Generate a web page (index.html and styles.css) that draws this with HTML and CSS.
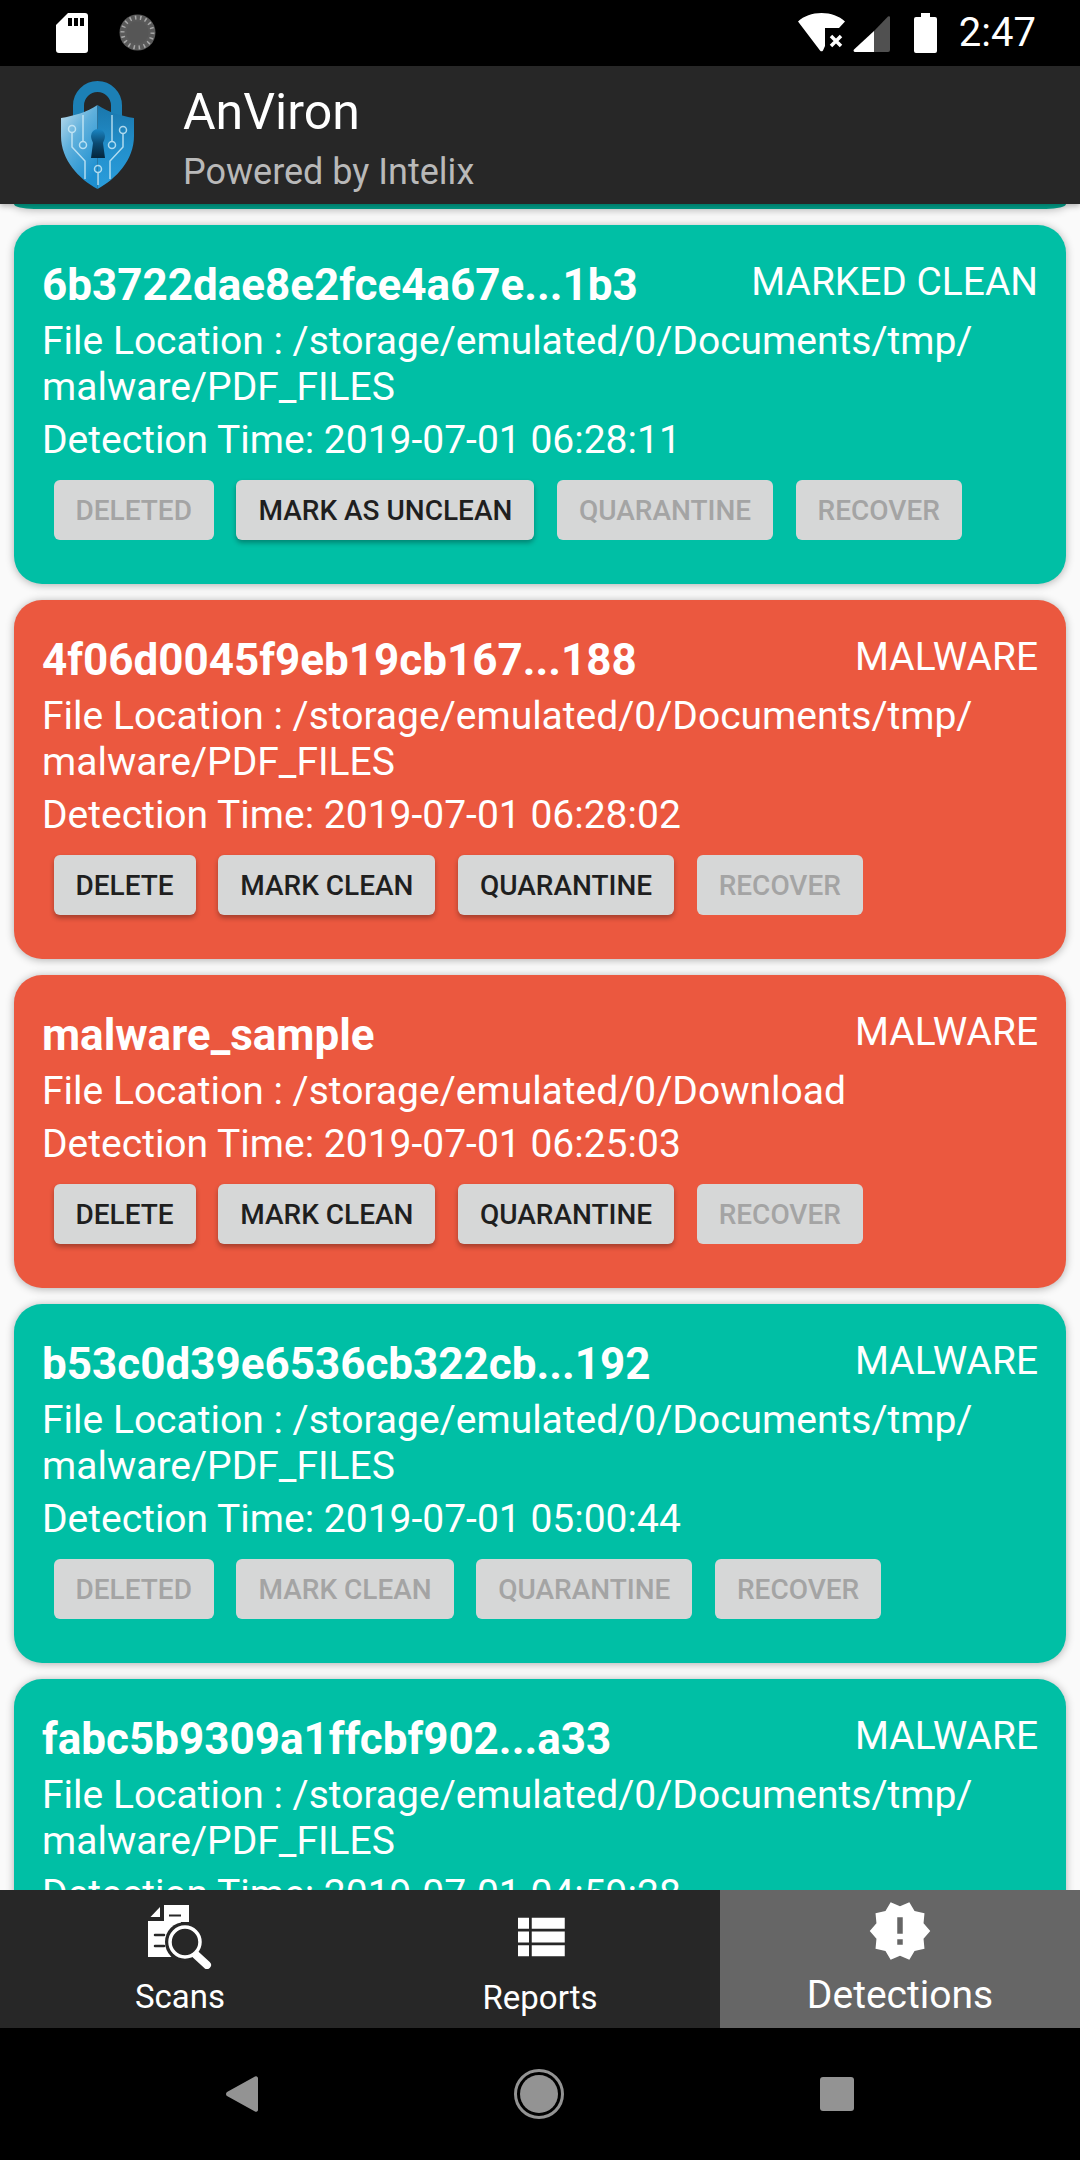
FILE: index.html
```html
<!DOCTYPE html>
<html lang="en">
<head>
    <meta charset="UTF-8">
    <meta name="viewport" content="width=device-width, initial-scale=1.0">
    <title>AnViron</title>
    <link rel="stylesheet" href="styles.css">
</head>
<body>
<div class="phone">

    <!-- status bar -->
    <div class="statusbar">
        <div class="status-left">
            <svg class="ic-sd" viewBox="0 0 32 40"><path d="M12 0H29a3 3 0 0 1 3 3V37a3 3 0 0 1-3 3H3a3 3 0 0 1-3-3V12Z" fill="#fff"/><path d="M12 5h4v8h-4zM18 5h4v8h-4zM24 5h4v8h-4z" fill="#000"/></svg>
            <svg class="ic-sync" viewBox="0 0 38 40"><path d="M35 8A19 19 0 0 1 8 36 19 19 0 0 0 35 8Z" fill="#eee"/><circle cx="18.500" cy="19.500" r="18" fill="#5a5a5a"/><circle cx="18.500" cy="19.500" r="15" fill="none" stroke="#a8a8a8" stroke-width="4" stroke-dasharray="1.500 3.700"/><circle cx="18.500" cy="19.500" r="11" fill="#565656"/></svg>
        </div>
        <div class="status-right">
            <svg class="ic-wifi" viewBox="0 0 47 39"><path d="M0 8.500C6 3 14 0 23.500 0S41 3 47 8.500L41 15H27V33L25 37.500a2 2 0 0 1-3 0Z" fill="#fff"/><path d="M33 23l10 10M43 23L33 33" stroke="#fff" stroke-width="3.500" fill="none"/></svg>
            <svg class="ic-signal" viewBox="0 0 37 37"><path d="M21 16V37H2a1.500 1.500 0 0 1-1-2.600Z" fill="#fff"/><path d="M21 16L35 1.500A1.200 1.200 0 0 1 37 2V35a2 2 0 0 1-2 2H21Z" fill="#505050"/></svg>
            <svg class="ic-battery" viewBox="0 0 23 40"><path d="M7 0h9v4h5a2 2 0 0 1 2 2V38a2 2 0 0 1-2 2H2a2 2 0 0 1-2-2V6a2 2 0 0 1 2-2h5Z" fill="#fff"/></svg>
            <span class="clock">2:47</span>
        </div>
    </div>

    <!-- app bar -->
    <header class="appbar">
        <svg class="logo" viewBox="0 0 73 108">
            <defs>
                <linearGradient id="shieldLeft" x1="0" y1="0" x2="0.600" y2="1">
                    <stop offset="0" stop-color="#c6e0ee"/>
                    <stop offset="0.450" stop-color="#5fb0dc"/>
                    <stop offset="1" stop-color="#1d8fd0"/>
                </linearGradient>
                <linearGradient id="shieldRight" x1="0" y1="0" x2="0" y2="1">
                    <stop offset="0" stop-color="#1a76ab"/>
                    <stop offset="0.500" stop-color="#228fcb"/>
                    <stop offset="1" stop-color="#2a9ddc"/>
                </linearGradient>
                <linearGradient id="keyhole" x1="0" y1="0" x2="0" y2="1">
                    <stop offset="0" stop-color="#1a86c4"/>
                    <stop offset="0.500" stop-color="#0b4a72"/>
                    <stop offset="1" stop-color="#04263c"/>
                </linearGradient>
            </defs>
            <path d="M17.500 36V24.500a19 19 0 0 1 38 0V36" fill="none" stroke="#1c80b6" stroke-width="11"/>
            <path d="M36.500 24C26 31 13 35 0 37V55C0 79 18 98 36.500 108Z" fill="url(#shieldLeft)"/>
            <path d="M36.500 24C47 31 60 35 73 37V55C73 79 55 98 36.500 108Z" fill="url(#shieldRight)"/>
            <g fill="none" stroke="#d2eef9" stroke-width="1.500" opacity="0.800">
                <path d="M22 60V34M51 60V34M11 52V66L24 80V98M62 53V66L49 80V98M37 92V104"/>
                <circle cx="22" cy="64" r="3.500"/>
                <circle cx="51" cy="64" r="3.500"/>
                <circle cx="37" cy="88" r="3.500"/>
                <circle cx="11" cy="48" r="3.500"/>
                <circle cx="62" cy="49" r="3.500"/>
            </g>
            <path d="M30 55a7 7 0 1 1 14 0c0 3-1.500 5-2 7L44 77H30L32 62c-.5-2-2-4-2-7Z" fill="url(#keyhole)"/>
        </svg>
        <div class="appbar-text">
            <div class="app-name">AnViron</div>
            <div class="app-sub">Powered by Intelix</div>
        </div>
    </header>

    <!-- detections -->
    <main class="list">
        <div class="card-stub"></div>

        <div class="card clean">
            <div class="card-head">
                <span class="card-title">6b3722dae8e2fce4a67e...1b3</span>
                <span class="card-status">MARKED CLEAN</span>
            </div>
            <p class="line">File Location : /storage/emulated/0/Documents/tmp/<br>malware/PDF_FILES</p>
            <p class="line time">Detection Time: 2019-07-01 06:28:11</p>
            <div class="actions">
                <button class="btn off">DELETED</button>
                <button class="btn">MARK AS UNCLEAN</button>
                <button class="btn off">QUARANTINE</button>
                <button class="btn off">RECOVER</button>
            </div>
        </div>

        <div class="card bad">
            <div class="card-head">
                <span class="card-title">4f06d0045f9eb19cb167...188</span>
                <span class="card-status">MALWARE</span>
            </div>
            <p class="line">File Location : /storage/emulated/0/Documents/tmp/<br>malware/PDF_FILES</p>
            <p class="line time">Detection Time: 2019-07-01 06:28:02</p>
            <div class="actions">
                <button class="btn">DELETE</button>
                <button class="btn">MARK CLEAN</button>
                <button class="btn">QUARANTINE</button>
                <button class="btn off">RECOVER</button>
            </div>
        </div>

        <div class="card bad">
            <div class="card-head">
                <span class="card-title">malware_sample</span>
                <span class="card-status">MALWARE</span>
            </div>
            <p class="line">File Location : /storage/emulated/0/Download</p>
            <p class="line time">Detection Time: 2019-07-01 06:25:03</p>
            <div class="actions">
                <button class="btn">DELETE</button>
                <button class="btn">MARK CLEAN</button>
                <button class="btn">QUARANTINE</button>
                <button class="btn off">RECOVER</button>
            </div>
        </div>

        <div class="card clean">
            <div class="card-head">
                <span class="card-title">b53c0d39e6536cb322cb...192</span>
                <span class="card-status">MALWARE</span>
            </div>
            <p class="line">File Location : /storage/emulated/0/Documents/tmp/<br>malware/PDF_FILES</p>
            <p class="line time">Detection Time: 2019-07-01 05:00:44</p>
            <div class="actions">
                <button class="btn off">DELETED</button>
                <button class="btn off">MARK CLEAN</button>
                <button class="btn off">QUARANTINE</button>
                <button class="btn off">RECOVER</button>
            </div>
        </div>

        <div class="card clean">
            <div class="card-head">
                <span class="card-title">fabc5b9309a1ffcbf902...a33</span>
                <span class="card-status">MALWARE</span>
            </div>
            <p class="line">File Location : /storage/emulated/0/Documents/tmp/<br>malware/PDF_FILES</p>
            <p class="line time">Detection Time: 2019-07-01 04:59:28</p>
        </div>
    </main>

    <!-- bottom tabs -->
    <nav class="tabs">
        <div class="tab">
            <svg class="ic-scans" viewBox="0 0 64 64">
                <path d="M16 0H41V17H33V19H16Z" fill="#fff"/>
                <path d="M21 9.500H33V11.500H21Z" fill="#272727"/>
                <path d="M12 2V12H2.500Z" fill="#fff"/>
                <path d="M0 16H33V52H0Z" fill="#fff"/>
                <path d="M7 30h9M7 41h9" stroke="#272727" stroke-width="2.500" stroke-linecap="round"/>
                <circle cx="37" cy="37" r="20" fill="#272727"/>
                <path d="M47 49L59 60" stroke="#fff" stroke-width="8" stroke-linecap="round"/>
                <circle cx="37" cy="37" r="15" fill="#272727" stroke="#fff" stroke-width="3.500"/>
            </svg>
            <span class="tab-label">Scans</span>
        </div>
        <div class="tab">
            <svg class="ic-reports" viewBox="0 0 24 24"><path d="M4 14h4v-4H4v4zm0 5h4v-4H4v4zM4 9h4V5H4v4zm5 5h12v-4H9v4zm0 5h12v-4H9v4zM9 5v4h12V5H9z" fill="#fff"/></svg>
            <span class="tab-label">Reports</span>
        </div>
        <div class="tab active">
            <svg class="ic-detect" viewBox="0 0 24 24"><path d="M23 12l-2.440-2.780.34-3.680-3.610-.82-1.890-3.180L12 3 8.600 1.540 6.710 4.720l-3.610.81.34 3.680L1 12l2.440 2.780-.34 3.690 3.610.82 1.890 3.180L12 21l3.400 1.460 1.890-3.180 3.610-.82-.34-3.680L23 12zm-10 5h-2v-2h2v2zm0-4h-2V7h2v6z" fill="#fff"/></svg>
            <span class="tab-label">Detections</span>
        </div>
    </nav>

    <!-- system navigation -->
    <div class="sysnav">
        <svg class="ic-back" viewBox="0 0 32 36"><path d="M29 .5a2 2 0 0 1 3 1.500V34a2 2 0 0 1-3 1.500L1 20a2.500 2.500 0 0 1 0-4Z" fill="#939393"/></svg>
        <svg class="ic-home" viewBox="0 0 50 50"><circle cx="25" cy="25" r="23.500" fill="none" stroke="#939393" stroke-width="3"/><circle cx="25" cy="25" r="19" fill="#939393"/></svg>
        <div class="ic-recent"></div>
    </div>
</div>
</body>
</html>
```

FILE: styles.css
```css
* {
    box-sizing: border-box;
}
body {
    margin: 0;
    font-family: Roboto, "Liberation Sans", sans-serif;
    color: #fff;
}
.phone {
    width: 1080px;
    height: 2160px;
    display: flex;
    flex-direction: column;
    overflow: hidden;
    background-color: #fafafa;
}

/* status bar */
.statusbar {
    height: 66px;
    flex: none;
    background-color: #000;
    display: flex;
    justify-content: space-between;
    padding: 13px 44px 0 56px;
}
.status-left {
    display: flex;
    gap: 31px;
}
.status-right {
    display: flex;
}
.ic-sd {
    width: 32px;
    height: 40px;
}
.ic-sync {
    width: 38px;
    height: 40px;
}
.ic-wifi {
    width: 47px;
    height: 39px;
}
.ic-signal {
    width: 37px;
    height: 37px;
    margin: 2px 0 0 8px;
}
.ic-battery {
    width: 23px;
    height: 40px;
    margin-left: 24px;
}
.clock {
    font-size: 40px;
    line-height: 40px;
    margin-left: 22px;
}

/* app bar */
.appbar {
    height: 138px;
    flex: none;
    background-color: #272727;
    display: flex;
    padding: 15px 0 0 61px;
    position: relative;
    z-index: 2;
    box-shadow: 0 2px 6px rgba(0, 0, 0, 0.3);
}
.logo {
    width: 73px;
    height: 108px;
}
.appbar-text {
    margin-left: 49px;
}
.app-name {
    font-size: 50px;
    line-height: 62px;
}
.app-sub {
    font-size: 36px;
    line-height: 58px;
    color: #b9b9b9;
}

/* list */
.list {
    flex: 1;
    min-height: 0;
    overflow: hidden;
    padding: 0 14px;
}
.card-stub {
    height: 5px;
    margin-bottom: 16px;
    background-color: #009e88;
    border-radius: 0 0 20px 20px / 0 0 5px 5px;
    box-shadow: 0 1px 8px rgba(0, 0, 0, 0.3);
}
.card {
    border-radius: 28px;
    padding: 29px 28px 44px;
    margin-bottom: 16px;
    box-shadow: 0 1px 8px rgba(0, 0, 0, 0.3);
}
.clean {
    background-color: #00bfa5;
}
.bad {
    background-color: #eb583f;
}
.card-head {
    display: flex;
    justify-content: space-between;
    align-items: flex-start;
    height: 64px;
}
.card-title {
    font-size: 44px;
    line-height: 62px;
    font-weight: 700;
}
.card-status {
    font-size: 38.9px;
    line-height: 55px;
}
.line {
    margin: 0;
    font-size: 39px;
    line-height: 46px;
}
.time {
    margin-top: 7px;
}
.actions {
    display: flex;
    gap: 22.5px;
    margin: 17px 0 0 11.5px;
}
.btn {
    height: 60px;
    padding: 0 22px;
    border: none;
    border-radius: 6px;
    background-color: #d6d7d7;
    color: #1f1f1f;
    font-family: Roboto, "Liberation Sans", sans-serif;
    font-size: 28px;
    font-weight: 500;
    white-space: nowrap;
    box-shadow: 0 3px 5px rgba(0, 0, 0, 0.3);
}
.btn.off {
    color: #a4a4a4;
    box-shadow: none;
}

/* tabs */
.tabs {
    height: 138px;
    flex: none;
    background-color: #272727;
    display: flex;
    position: relative;
    z-index: 2;
}
.tab {
    width: 360px;
    display: flex;
    flex-direction: column;
    align-items: center;
}
.tab.active {
    background-color: #666;
}
.tab-label {
    font-size: 33px;
    line-height: 40px;
}
.ic-scans {
    width: 64px;
    height: 64px;
    margin: 15px 0 8px;
}
.ic-reports {
    width: 66px;
    height: 66px;
    margin: 14px 0 8px;
}
.ic-detect {
    width: 66px;
    height: 66px;
    margin: 8px 0 8px;
}
.active .tab-label {
    font-size: 39px;
    line-height: 46px;
}

/* system navigation */
.sysnav {
    height: 132px;
    flex: none;
    background-color: #000;
    display: flex;
    align-items: center;
    justify-content: space-between;
    padding: 0 226px;
}
.ic-back {
    width: 32px;
    height: 36px;
}
.ic-home {
    width: 50px;
    height: 50px;
}
.ic-recent {
    width: 34px;
    height: 34px;
    background-color: #939393;
    border-radius: 3px;
}
```
